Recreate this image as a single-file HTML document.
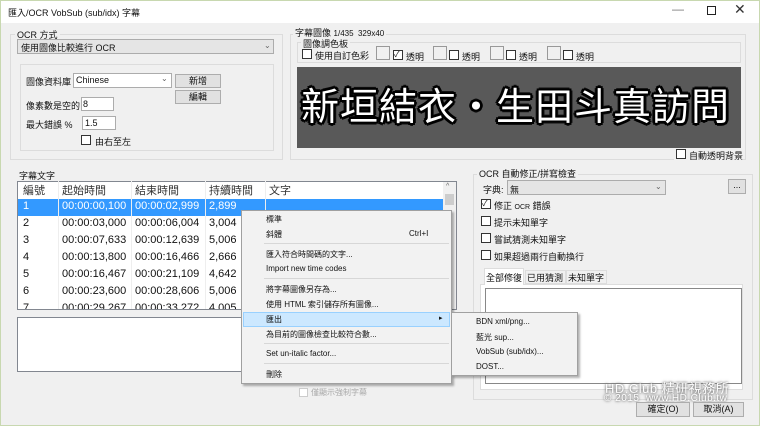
<!DOCTYPE html>
<html><head><meta charset="utf-8"><style>
*{box-sizing:border-box;margin:0;padding:0}
body{width:760px;height:426px;overflow:hidden;background:#c8d8b0;font-family:"Liberation Sans","Noto Sans CJK TC",sans-serif;font-size:9px;color:#111;position:relative}
.a{position:absolute}
.win{left:1px;top:1px;width:758px;height:424px;background:#f0f0f0}
.title{left:1px;top:1px;width:758px;height:22px;background:#fff}
.grp{border:1px solid #dcdcdc}
.lbl{background:#f0f0f0;padding:0 2px;white-space:nowrap}
.sel{background:#e5e5e5;border:1px solid #acacac}
.inp{background:#fff;border:1px solid #acacac}
.btn{background:#e1e1e1;border:1px solid #adadad;text-align:center}
.cb{width:10px;height:10px;border:1px solid #333;background:#fff}
.t{white-space:nowrap}
.cell{position:absolute;font-size:11px;white-space:nowrap}
.mi{position:absolute;left:24px;font-size:8px;white-space:nowrap}
.sep{position:absolute;left:22px;right:2px;height:1px;background:#d7d7d7}
</style></head><body>
<div class="a win"></div>
<div class="a title"></div>
<div class="a t" style="left:8px;top:6px;font-size:9px">匯入/OCR VobSub (sub/idx) 字幕</div>
<div class="a t" style="left:672px;top:2px;font-size:12px;color:#777">—</div>
<div class="a" style="left:707px;top:6px;width:9px;height:9px;border:1px solid #222"></div>
<div class="a t" style="left:734px;top:1px;font-size:14px;color:#333">✕</div>

<div class="a grp" style="left:10px;top:34px;width:273px;height:126px"></div>
<div class="a lbl" style="left:15px;top:28px">OCR 方式</div>
<div class="a sel" style="left:17px;top:39px;width:257px;height:15px"></div>
<div class="a t" style="left:21px;top:41px">使用圖像比較進行 OCR</div>
<div class="a t" style="left:264px;top:41px;color:#666;font-size:8px">⌄</div>
<div class="a grp" style="left:20px;top:64px;width:254px;height:87px"></div>
<div class="a t" style="left:26px;top:75px">圖像資料庫</div>
<div class="a sel" style="left:73px;top:73px;width:99px;height:15px;background:#fff"></div>
<div class="a t" style="left:76px;top:75px">Chinese</div>
<div class="a t" style="left:161px;top:74px;color:#666;font-size:8px">⌄</div>
<div class="a btn" style="left:175px;top:74px;width:46px;height:14px;line-height:12px">新增</div>
<div class="a btn" style="left:175px;top:90px;width:46px;height:14px;line-height:12px">編輯</div>
<div class="a t" style="left:26px;top:99px">像素數是空的</div>
<div class="a inp" style="left:81px;top:97px;width:33px;height:14px"></div>
<div class="a t" style="left:83px;top:99px">8</div>
<div class="a t" style="left:26px;top:118px">最大錯誤 %</div>
<div class="a inp" style="left:82px;top:116px;width:34px;height:14px"></div>
<div class="a t" style="left:85px;top:118px">1.5</div>
<div class="a cb" style="left:81px;top:135px"></div>
<div class="a t" style="left:95px;top:135px">由右至左</div>

<div class="a grp" style="left:290px;top:34px;width:456px;height:126px"></div>
<div class="a lbl" style="left:293px;top:26px">字幕圖像 <span style="font-size:8px">1/435 &nbsp;329x40</span></div>
<div class="a grp" style="left:297px;top:42px;width:444px;height:21px"></div>
<div class="a lbl" style="left:301px;top:37px">圖像調色板</div>
<div class="a cb" style="left:302px;top:49px"></div>
<div class="a t" style="left:315px;top:49px">使用自訂色彩</div>
<div class="a" style="left:376px;top:46px;width:14px;height:14px;border:1px solid #999"></div>
<div class="a cb" style="left:393px;top:50px;font-size:8px;line-height:8px">✓</div>
<div class="a t" style="left:406px;top:50px">透明</div>
<div class="a" style="left:433px;top:46px;width:14px;height:14px;border:1px solid #999"></div>
<div class="a cb" style="left:449px;top:50px"></div><div class="a t" style="left:462px;top:50px">透明</div>
<div class="a" style="left:490px;top:46px;width:14px;height:14px;border:1px solid #999"></div>
<div class="a cb" style="left:506px;top:50px"></div><div class="a t" style="left:519px;top:50px">透明</div>
<div class="a" style="left:547px;top:46px;width:14px;height:14px;border:1px solid #999"></div>
<div class="a cb" style="left:563px;top:50px"></div><div class="a t" style="left:576px;top:50px">透明</div>
<div class="a" style="left:297px;top:67px;width:444px;height:81px;background:#595959"></div>
<div class="a t" style="left:301px;top:82px;font-size:38px;color:#fff;letter-spacing:1px;font-family:'Noto Sans CJK TC',sans-serif;text-shadow:-2px 0 #000,2px 0 #000,0 -2px #000,0 2px #000,2px 2px #000,-2px -2px #000,2px -2px #000,-2px 2px #000,-3px 0 #111,3px 0 #111,0 3px #111,0 -3px #111;line-height:44px">新垣結衣・生田斗真訪問</div>
<div class="a" style="left:674px;top:148px;width:67px;height:12px;background:#f0f0f0"></div>
<div class="a cb" style="left:676px;top:149px"></div>
<div class="a t" style="left:689px;top:149px">自動透明背景</div>

<div class="a t" style="left:19px;top:169px">字幕文字</div>
<div class="a" style="left:17px;top:181px;width:440px;height:129px;background:#fff;border:1px solid #828790"></div>
<div class="a" style="left:18px;top:199px;width:425px;height:17px;background:#3399ff"></div>
<div class="a" style="left:443px;top:182px;width:13px;height:127px;background:#f0f0f0"></div>
<div class="a" style="left:445px;top:194px;width:9px;height:11px;background:#cdcdcd"></div>
<div class="a t" style="left:446px;top:183px;font-size:7px;color:#666">^</div>
<div class="a" style="left:58px;top:181px;width:1px;height:128px;background:#eee"></div>
<div class="a" style="left:131px;top:181px;width:1px;height:128px;background:#eee"></div>
<div class="a" style="left:205px;top:181px;width:1px;height:128px;background:#eee"></div>
<div class="a" style="left:265px;top:181px;width:1px;height:128px;background:#eee"></div>
<div class="a" style="left:18px;top:181px;width:425px;height:128px;overflow:hidden">
<div class="cell" style="left:5px;top:1px;color:#333">編號</div><div class="cell" style="left:44px;top:1px;color:#333">起始時間</div><div class="cell" style="left:117px;top:1px;color:#333">結束時間</div><div class="cell" style="left:191px;top:1px;color:#333">持續時間</div><div class="cell" style="left:251px;top:1px;color:#333">文字</div>
<div class="cell" style="left:5px;top:19px;color:#fff">1</div><div class="cell" style="left:44px;top:19px;color:#fff">00:00:00,100</div><div class="cell" style="left:117px;top:19px;color:#fff">00:00:02,999</div><div class="cell" style="left:191px;top:19px;color:#fff">2,899</div>
<div class="cell" style="left:5px;top:36px">2</div><div class="cell" style="left:44px;top:36px">00:00:03,000</div><div class="cell" style="left:117px;top:36px">00:00:06,004</div><div class="cell" style="left:191px;top:36px">3,004</div>
<div class="cell" style="left:5px;top:53px">3</div><div class="cell" style="left:44px;top:53px">00:00:07,633</div><div class="cell" style="left:117px;top:53px">00:00:12,639</div><div class="cell" style="left:191px;top:53px">5,006</div>
<div class="cell" style="left:5px;top:70px">4</div><div class="cell" style="left:44px;top:70px">00:00:13,800</div><div class="cell" style="left:117px;top:70px">00:00:16,466</div><div class="cell" style="left:191px;top:70px">2,666</div>
<div class="cell" style="left:5px;top:87px">5</div><div class="cell" style="left:44px;top:87px">00:00:16,467</div><div class="cell" style="left:117px;top:87px">00:00:21,109</div><div class="cell" style="left:191px;top:87px">4,642</div>
<div class="cell" style="left:5px;top:104px">6</div><div class="cell" style="left:44px;top:104px">00:00:23,600</div><div class="cell" style="left:117px;top:104px">00:00:28,606</div><div class="cell" style="left:191px;top:104px">5,006</div>
<div class="cell" style="left:5px;top:121px">7</div><div class="cell" style="left:44px;top:121px">00:00:29,267</div><div class="cell" style="left:117px;top:121px">00:00:33,272</div><div class="cell" style="left:191px;top:121px">4,005</div>
</div>
<div class="a" style="left:17px;top:317px;width:430px;height:55px;background:#fff;border:1px solid #828790"></div>
<div class="a" style="left:299px;top:388px;width:9px;height:9px;border:1px solid #ccc;background:#fff"></div>
<div class="a t" style="left:311px;top:387px;color:#aaa;font-size:8px">僅顯示強制字幕</div>

<div class="a grp" style="left:473px;top:174px;width:280px;height:226px"></div>
<div class="a lbl" style="left:477px;top:167px">OCR 自動修正/拼寫檢查</div>
<div class="a t" style="left:483px;top:183px">字典:</div>
<div class="a sel" style="left:507px;top:180px;width:159px;height:15px"></div>
<div class="a t" style="left:510px;top:183px">無</div>
<div class="a t" style="left:655px;top:182px;color:#666;font-size:8px">⌄</div>
<div class="a btn" style="left:728px;top:179px;width:18px;height:15px;line-height:11px">...</div>
<div class="a cb" style="left:481px;top:199px;font-size:8px;line-height:8px">✓</div><div class="a t" style="left:494px;top:199px">修正 <span style="font-size:7px">OCR</span> 錯誤</div>
<div class="a cb" style="left:481px;top:216px"></div><div class="a t" style="left:494px;top:216px">提示未知單字</div>
<div class="a cb" style="left:481px;top:233px"></div><div class="a t" style="left:494px;top:233px">嘗試猜測未知單字</div>
<div class="a cb" style="left:481px;top:250px"></div><div class="a t" style="left:494px;top:250px">如果超過兩行自動換行</div>
<div class="a" style="left:480px;top:284px;width:263px;height:106px;background:#fff;border:1px solid #ddd"></div>
<div class="a" style="left:484px;top:268px;width:40px;height:17px;background:#fff;border:1px solid #ddd;border-bottom:none"></div>
<div class="a" style="left:525px;top:270px;width:41px;height:14px;border:1px solid #ddd"></div>
<div class="a" style="left:566px;top:270px;width:41px;height:14px;border:1px solid #ddd"></div>
<div class="a t" style="left:486px;top:271px">全部修復</div>
<div class="a t" style="left:527px;top:271px">已用猜測</div>
<div class="a t" style="left:568px;top:271px">未知單字</div>
<div class="a" style="left:485px;top:288px;width:257px;height:96px;border:1px solid #888"></div>

<div class="a t" style="left:605px;top:378px;font-size:13px;color:#fff;text-shadow:0 0 3px #777,0 0 2px #777;letter-spacing:0.5px">HD.Club 精研視務所</div>
<div class="a t" style="left:604px;top:393px;font-size:10px;color:#fff;text-shadow:0 0 3px #777,0 0 2px #777;letter-spacing:0.5px">© 2015 &nbsp;www.HD.Club.tw</div>
<div class="a btn" style="left:636px;top:402px;width:54px;height:15px;line-height:13px">確定(O)</div>
<div class="a btn" style="left:693px;top:402px;width:51px;height:15px;line-height:13px">取消(A)</div>

<div class="a" style="left:241px;top:210px;width:211px;height:174px;background:#f2f2f2;border:1px solid #a0a0a0;box-shadow:2px 2px 2px rgba(0,0,0,.3)">
<div class="mi" style="top:3px">標準</div>
<div class="mi" style="top:18px">斜體</div><div class="mi" style="left:167px;top:18px">Ctrl+I</div>
<div class="sep" style="top:32px"></div>
<div class="mi" style="top:38px">匯入符合時間碼的文字...</div>
<div class="mi" style="top:53px">Import new time codes</div>
<div class="sep" style="top:67px"></div>
<div class="mi" style="top:73px">將字幕圖像另存為...</div>
<div class="mi" style="top:88px">使用 HTML 索引儲存所有圖像...</div>
<div class="a" style="left:1px;top:101px;width:207px;height:15px;background:#cce8ff;border:1px solid #99d1ff"></div>
<div class="mi" style="top:103px">匯出</div><div class="mi" style="left:197px;top:103px;font-size:7px">▸</div>
<div class="mi" style="top:118px">為目前的圖像檢查比較符合數...</div>
<div class="sep" style="top:132px"></div>
<div class="mi" style="top:138px">Set un-italic factor...</div>
<div class="sep" style="top:152px"></div>
<div class="mi" style="top:158px">刪除</div>
</div>
<div class="a" style="left:451px;top:312px;width:127px;height:64px;background:#f2f2f2;border:1px solid #a0a0a0;box-shadow:2px 2px 2px rgba(0,0,0,.3)">
<div class="mi" style="left:24px;top:4px">BDN xml/png...</div>
<div class="mi" style="left:24px;top:19px">藍光 sup...</div>
<div class="mi" style="left:24px;top:34px">VobSub (sub/idx)...</div>
<div class="mi" style="left:24px;top:49px">DOST...</div>
</div>
</body></html>
